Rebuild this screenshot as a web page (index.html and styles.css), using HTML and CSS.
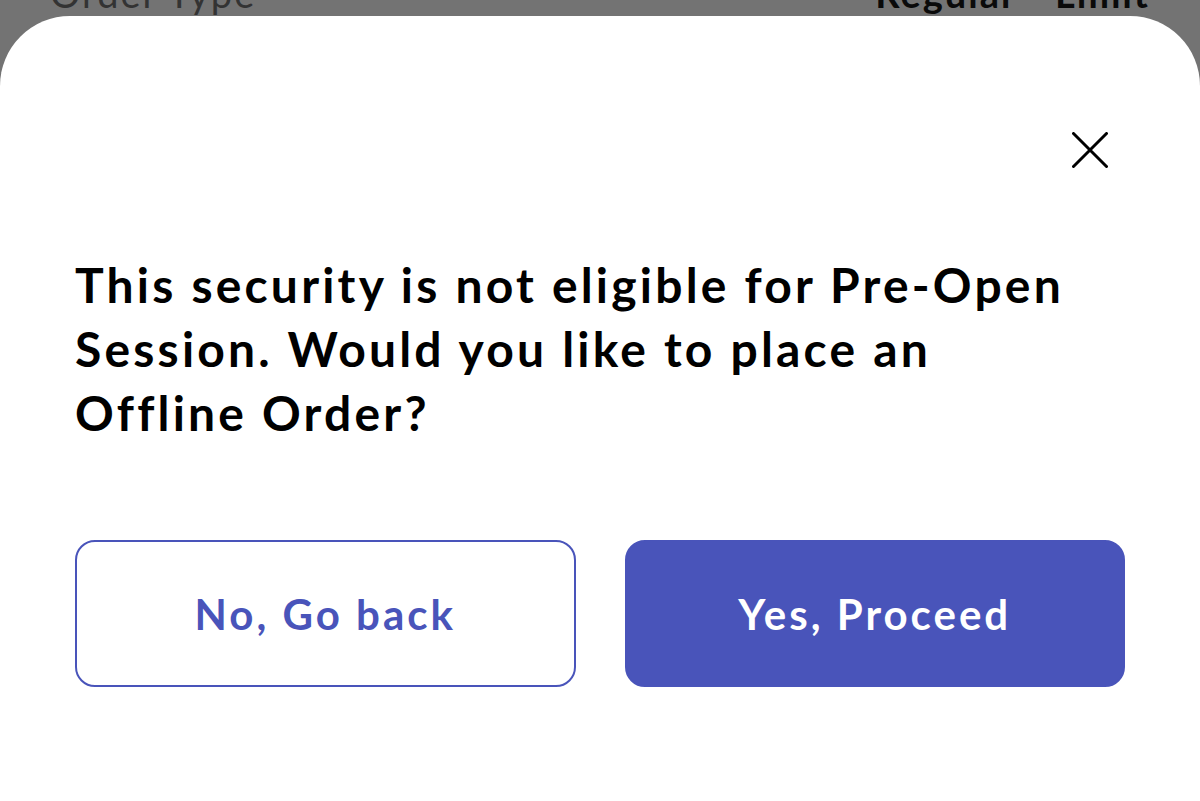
FILE: index.html
```html
<!DOCTYPE html>
<html lang="en">
<head>
<meta charset="utf-8">
<title>Offline Order</title>
<link rel="stylesheet" href="styles.css">
</head>
<body>
<div class="backdrop">
  <div class="bg-row">
    <span class="bg-label">Order Type</span>
    <span class="bg-value">Regular - Limit</span>
  </div>
</div>
<div class="sheet">
  <div class="close-row">
    <button class="close" aria-label="Close">
      <svg width="36" height="36" viewBox="0 0 36 36" fill="none" stroke="#000" stroke-width="3" stroke-linecap="round">
        <path d="M1.5 1.5 L34.5 34.5 M34.5 1.5 L1.5 34.5"/>
      </svg>
    </button>
  </div>
  <h1 class="message">This security is not eligible for Pre-Open Session. Would you like to place an Offline Order?</h1>
  <div class="actions">
    <button class="btn btn-outline">No, Go back</button>
    <button class="btn btn-solid">Yes, Proceed</button>
  </div>
</div>
</body>
</html>
```

FILE: styles.css
```css
html, body {
  margin: 0;
  padding: 0;
  background: #737373;
  height: 801px;
  overflow: hidden;
  font-family: "Lato", "Noto Sans", sans-serif;
}

.backdrop {
  height: 16px;
  overflow: hidden;
}

.bg-row {
  display: flex;
  justify-content: space-between;
  padding: 0 50px 0 50px;
  margin-top: -30px;
  line-height: 46px;
  font-size: 38px;
  letter-spacing: 2px;
}

.bg-label {
  color: #333;
  font-weight: 400;
}

.bg-value {
  color: #0a0a0a;
  font-weight: 700;
}

.sheet {
  background: #fff;
  border-radius: 70px 70px 0 0;
  height: 785px;
  padding: 0 75px;
  box-sizing: border-box;
}

.close-row {
  display: flex;
  justify-content: flex-end;
  padding-top: 116px;
  padding-right: 17px;
}

.close {
  background: none;
  border: 0;
  padding: 0;
  width: 36px;
  height: 36px;
  display: block;
  cursor: pointer;
}

.close svg {
  display: block;
}

.message {
  margin: 85px 0 0 0;
  max-width: 1005px;
  font-size: 48px;
  line-height: 64px;
  font-weight: 700;
  color: #000;
  letter-spacing: 3.2px;
}

.actions {
  display: flex;
  gap: 49px;
  margin-top: 95px;
}

.btn {
  flex: 1;
  height: 147px;
  border-radius: 20px;
  font-family: "Lato", "Noto Sans", sans-serif;
  font-size: 42px;
  font-weight: 700;
  letter-spacing: 3px;
  cursor: pointer;
  box-sizing: border-box;
}

.btn-outline {
  background: #fff;
  border: 2px solid #4954ba;
  color: #4954ba;
}

.btn-solid {
  background: #4954ba;
  border: 2px solid #4954ba;
  color: #fff;
}
```
